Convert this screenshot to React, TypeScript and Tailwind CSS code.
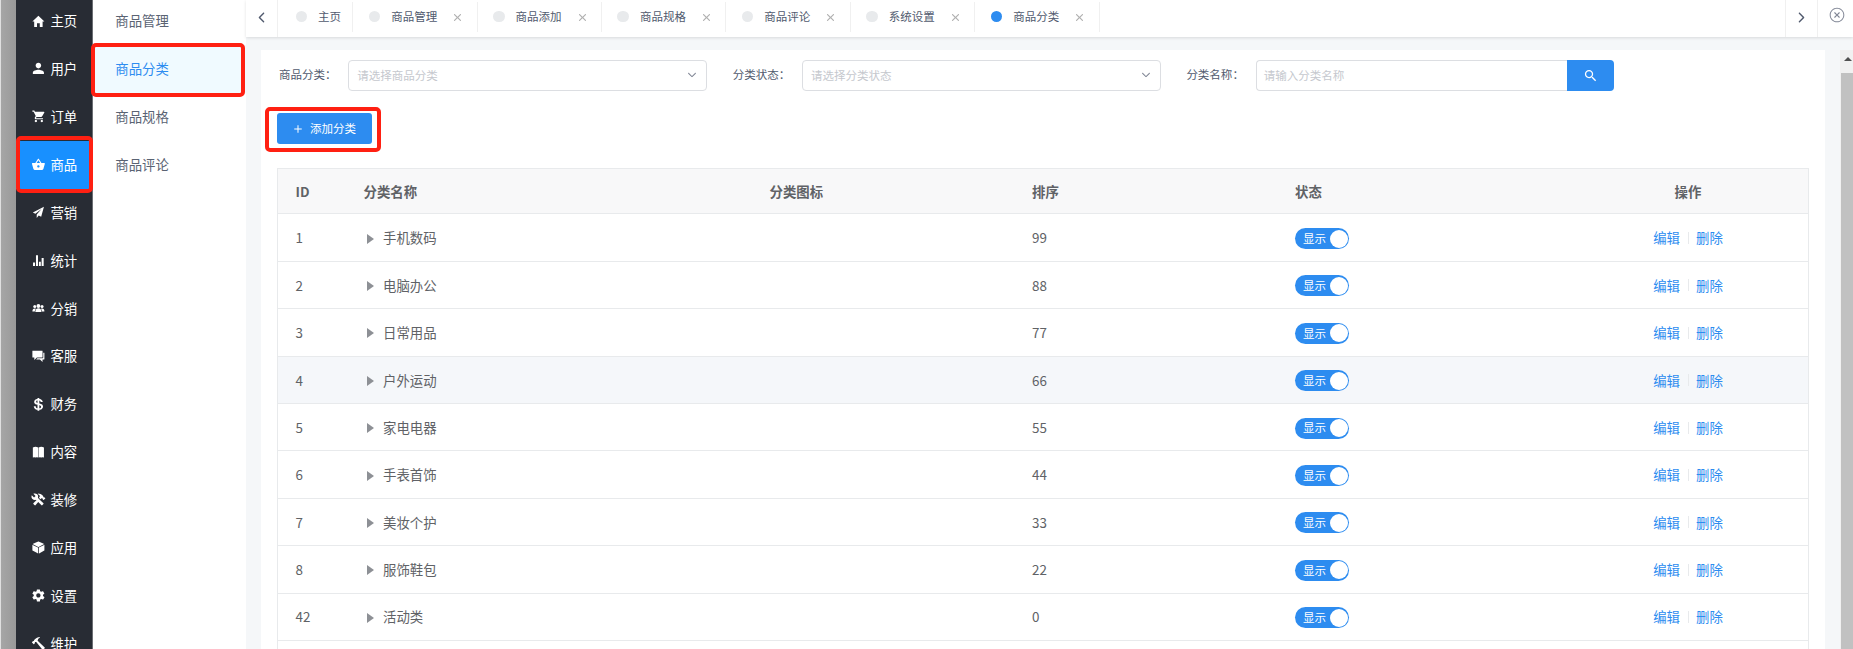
import type { ReactNode } from "react";
import clsx from "clsx";
import type { IconType } from "react-icons";
import {
  IoIosArrowBack,
  IoIosArrowDown,
  IoIosArrowForward,
  IoIosClose,
  IoIosCloseCircleOutline,
  IoIosCube,
  IoLogoUsd,
  IoMdAdd,
  IoMdBasket,
  IoMdCart,
  IoMdChatboxes,
  IoMdConstruct,
  IoMdHammer,
  IoMdHome,
  IoMdPerson,
  IoMdSearch,
  IoMdSettings,
} from "react-icons/io";

// solid variants of icons that the icon set only has in outline
function PlaneIcon({ className }: { className?: string }) {
  return (
    <svg viewBox="0 0 512 512" className={className} fill="currentColor">
      <path d="M448 64L64 256L152 303L364 142L198 328V448L266 362L352 408Z" />
    </svg>
  );
}

function BookIcon({ className }: { className?: string }) {
  return (
    <svg viewBox="0 0 512 512" className={className} fill="currentColor">
      <path d="M64 84Q156 40 248 84V436Q202 404 156 436Q110 404 64 436ZM264 84Q356 40 448 84V436Q402 404 356 436Q310 404 264 436Z" />
    </svg>
  );
}

function StatsIcon({ className }: { className?: string }) {
  return (
    <svg viewBox="0 0 512 512" className={className} fill="currentColor">
      <path d="M70 330H140V448H70ZM172 76H242V448H172ZM274 300H340V448H274ZM368 170H438V448H368Z" />
    </svg>
  );
}

function PeopleIcon({ className }: { className?: string }) {
  return (
    <svg viewBox="0 0 512 512" className={className} fill="currentColor">
      <circle cx="256" cy="172" r="66" />
      <circle cx="130" cy="192" r="52" />
      <circle cx="382" cy="192" r="52" />
      <path d="M150 384Q150 250 256 250Q362 250 362 384ZM48 362Q48 256 130 256Q160 256 172 268Q132 300 132 362ZM464 362Q464 256 382 256Q352 256 340 268Q380 300 380 362Z" />
    </svg>
  );
}

const NAV: { label: string; icon: IconType | typeof PlaneIcon }[] = [
  { label: "主页", icon: IoMdHome },
  { label: "用户", icon: IoMdPerson },
  { label: "订单", icon: IoMdCart },
  { label: "商品", icon: IoMdBasket },
  { label: "营销", icon: PlaneIcon },
  { label: "统计", icon: StatsIcon },
  { label: "分销", icon: PeopleIcon },
  { label: "客服", icon: IoMdChatboxes },
  { label: "财务", icon: IoLogoUsd },
  { label: "内容", icon: BookIcon },
  { label: "装修", icon: IoMdConstruct },
  { label: "应用", icon: IoIosCube },
  { label: "设置", icon: IoMdSettings },
  { label: "维护", icon: IoMdHammer },
];

const SUB_NAV = ["商品管理", "商品分类", "商品规格", "商品评论"];

const TABS = ["商品管理", "商品添加", "商品规格", "商品评论", "系统设置", "商品分类"];

const ROWS = [
  { id: 1, name: "手机数码", sort: 99 },
  { id: 2, name: "电脑办公", sort: 88 },
  { id: 3, name: "日常用品", sort: 77 },
  { id: 4, name: "户外运动", sort: 66 },
  { id: 5, name: "家电电器", sort: 55 },
  { id: 6, name: "手表首饰", sort: 44 },
  { id: 7, name: "美妆个护", sort: 33 },
  { id: 8, name: "服饰鞋包", sort: 22 },
  { id: 42, name: "活动类", sort: 0 },
];

const GRID = "grid grid-cols-[68px_406px_262.5px_263px_290px_1fr] items-center";

function Highlight({ className }: { className: string }) {
  return (
    <span
      aria-hidden
      className={clsx("pointer-events-none absolute z-10 rounded-[5px] border-4 border-[#ff2012]", className)}
    />
  );
}

function Sidebar() {
  return (
    <nav className="w-[77px] shrink-0 border-r border-[#6b6e73] bg-[#282c34] text-white">
      <ul className="-mt-[3px]">
        {NAV.map(({ label, icon: Icon }) => {
          const active = label === "商品";
          return (
            <li
              key={label}
              className={clsx("relative flex h-[47.9px] items-center pl-[15px]", active && "bg-[#1890ff]")}
            >
              <Icon className="size-[14.8px]" />
              <span className="ml-[4.6px]">{label}</span>
              {active && <Highlight className="-top-[5px] left-0 h-[57px] w-[77px]" />}
            </li>
          );
        })}
      </ul>
    </nav>
  );
}

function SubNav() {
  return (
    <nav className="w-[153px] shrink-0 bg-white text-[#5a6373]">
      <ul className="-mt-[3px]">
        {SUB_NAV.map((label) => {
          const active = label === "商品分类";
          return (
            <li
              key={label}
              className={clsx(
                "relative flex h-[47.9px] items-center pl-[22.3px]",
                active && "bg-[#f0faff] text-[#2d8cf0]",
              )}
            >
              {label}
              {active && <Highlight className="-top-[2px] -left-[2.5px] h-[54px] w-[154px]" />}
            </li>
          );
        })}
      </ul>
    </nav>
  );
}

function TabBar() {
  return (
    <header className="flex h-[37px] shrink-0 bg-white text-[11.5px] text-[#515a6e] shadow-[0_1px_3px_rgba(0,0,0,0.12)]">
      <button className="flex w-[32px] items-center justify-center border-r border-[#f0f0f0] pb-[3px]">
        <IoIosArrowBack className="size-[15px]" />
      </button>
      <div className="flex h-[32px] flex-1 pt-[2px]">
        <div className="flex w-[75.2px] items-center border-r border-[#f0f0f0] pb-px pl-[17.5px]">
          <span className="size-[11.5px] rounded-full bg-[#e8eaec]" />
          <span className="ml-[11px]">主页</span>
        </div>
        {TABS.map((tab) => (
          <div key={tab} className="flex w-[124.4px] items-center border-r border-[#f0f0f0] pb-px pl-[15.5px]">
            <span
              className={clsx("size-[11.5px] rounded-full", tab === "商品分类" ? "bg-[#2d8cf0]" : "bg-[#e8eaec]")}
            />
            <span className="ml-[11px] w-[46px] whitespace-nowrap">{tab}</span>
            <IoIosClose className="mt-px ml-[11px] size-[19px] text-[#b0b0b0]" />
          </div>
        ))}
      </div>
      <button className="flex w-[32px] items-center justify-center border-l border-[#f0f0f0] pb-[3px]">
        <IoIosArrowForward className="size-[15px]" />
      </button>
      <button className="flex w-[36px] justify-center border-l border-[#f0f0f0] pt-[6px] pl-[3px]">
        <IoIosCloseCircleOutline className="size-[18px] text-[#808695]" />
      </button>
    </header>
  );
}

function Field({ label, children }: { label: string; children: ReactNode }) {
  return (
    <div className="flex w-[453.7px] items-center text-[11.5px]">
      <span className="w-[69.3px] shrink-0 pb-[2px] whitespace-nowrap text-[#515a6e]">{label}：</span>
      {children}
    </div>
  );
}

function Select({ placeholder }: { placeholder: string }) {
  return (
    <div className="flex h-[31px] w-[359px] items-center justify-between rounded-[4px] border border-[#dcdee2] pr-2 pl-[8px] text-[#c5c8ce]">
      {placeholder}
      <IoIosArrowDown className="size-[12px] text-[#808695]" />
    </div>
  );
}

function Switch() {
  return (
    <span className="flex h-[21px] w-[54px] items-center justify-between rounded-full bg-[#2d8cf0] pr-[1.5px] pl-[8px] text-[11.5px] text-white">
      显示
      <span className="size-[18px] rounded-full bg-white" />
    </span>
  );
}

function CategoryTable() {
  return (
    <div className="mt-[24px] ml-[15.5px] h-[520px] w-[1532.5px] border border-[#e8eaec] text-[#606266]">
      <div className={clsx(GRID, "h-[44.9px] border-b border-[#e8eaec] bg-[#f8f8f9] font-bold")}>
        <span className="pl-[18px]">ID</span>
        <span className="pl-[18px]">分类名称</span>
        <span className="pl-[18px]">分类图标</span>
        <span className="pl-[18px]">排序</span>
        <span className="pl-[18px]">状态</span>
        <span className="pl-px text-center">操作</span>
      </div>
      {ROWS.map((row) => (
        <div
          key={row.id}
          className={clsx(GRID, "h-[47.4px] border-b border-[#e8eaec] pt-px", row.id === 4 && "bg-[#f5f7fa]")}
        >
          <span className="pl-[18px]">{row.id}</span>
          <span className="flex items-center pl-[21px]">
            <svg viewBox="0 0 7 10" className="mt-px h-[10px] w-[7px] fill-[#8d9095]">
              <path d="M0 0L7 5L0 10Z" />
            </svg>
            <span className="ml-[9.5px]">{row.name}</span>
          </span>
          <span />
          <span className="pl-[18px]">{row.sort}</span>
          <span className="pt-px pl-[18px]">
            <Switch />
          </span>
          <span className="flex items-center justify-center pl-px text-[#2d8cf0]">
            编辑
            <span className="mx-[7.5px] h-[12px] w-px bg-[#e8eaec]" />
            删除
          </span>
        </div>
      ))}
    </div>
  );
}

export default function App() {
  return (
    <div className="flex h-[649px] w-[1853px] overflow-hidden bg-[#f5f7f9] font-['Noto_Sans_CJK_SC',sans-serif] text-[13.4px] leading-none">
      <div className="w-4 shrink-0 border-l border-[#e0e0e0] bg-linear-to-r from-[#a6a6a6] to-[#999999]" />
      <Sidebar />
      <SubNav />
      <div className="flex min-w-0 flex-1 flex-col">
        <TabBar />
        <div className="flex min-h-0 flex-1 pt-[13.4px] pl-[15px]">
          <main className="w-[1564px] overflow-hidden bg-white">
            <div className="flex pt-[9.6px] pl-[18px]">
              <Field label="商品分类">
                <Select placeholder="请选择商品分类" />
              </Field>
              <Field label="分类状态">
                <Select placeholder="请选择分类状态" />
              </Field>
              <Field label="分类名称">
                <div className="flex h-[31px] w-[311px] shrink-0 items-center rounded-l-[4px] border border-r-0 border-[#dcdee2] pl-[7px] text-[#c5c8ce]">
                  请输入分类名称
                </div>
                <button className="flex h-[31px] w-[47.5px] shrink-0 items-center justify-center rounded-r-[4px] bg-[#2d8cf0] text-white">
                  <IoMdSearch className="size-[15px]" />
                </button>
              </Field>
            </div>
            <div className="relative mt-[22.5px] ml-[15.5px] w-[95px]">
              <button className="flex h-[31px] w-full items-center rounded-[3px] bg-[#2d8cf0] pl-[15px] text-[11.5px] text-white">
                <IoMdAdd className="size-[12px]" />
                <span className="ml-[6.5px]">添加分类</span>
              </button>
              <Highlight className="-top-[6.5px] -left-[12px] h-[45px] w-[116px]" />
            </div>
            <CategoryTable />
          </main>
          <div className="ml-auto flex w-[13px] flex-col items-center bg-[#f1f1f1]">
            <svg viewBox="0 0 8 4" className="mt-[7px] mb-3 ml-[2px] h-1 w-2 shrink-0 fill-[#505050]">
              <path d="M0 4L4 0L8 4Z" />
            </svg>
            <div className="ml-[2px] w-full flex-1 bg-[#c1c1c1]" />
          </div>
        </div>
      </div>
    </div>
  );
}
